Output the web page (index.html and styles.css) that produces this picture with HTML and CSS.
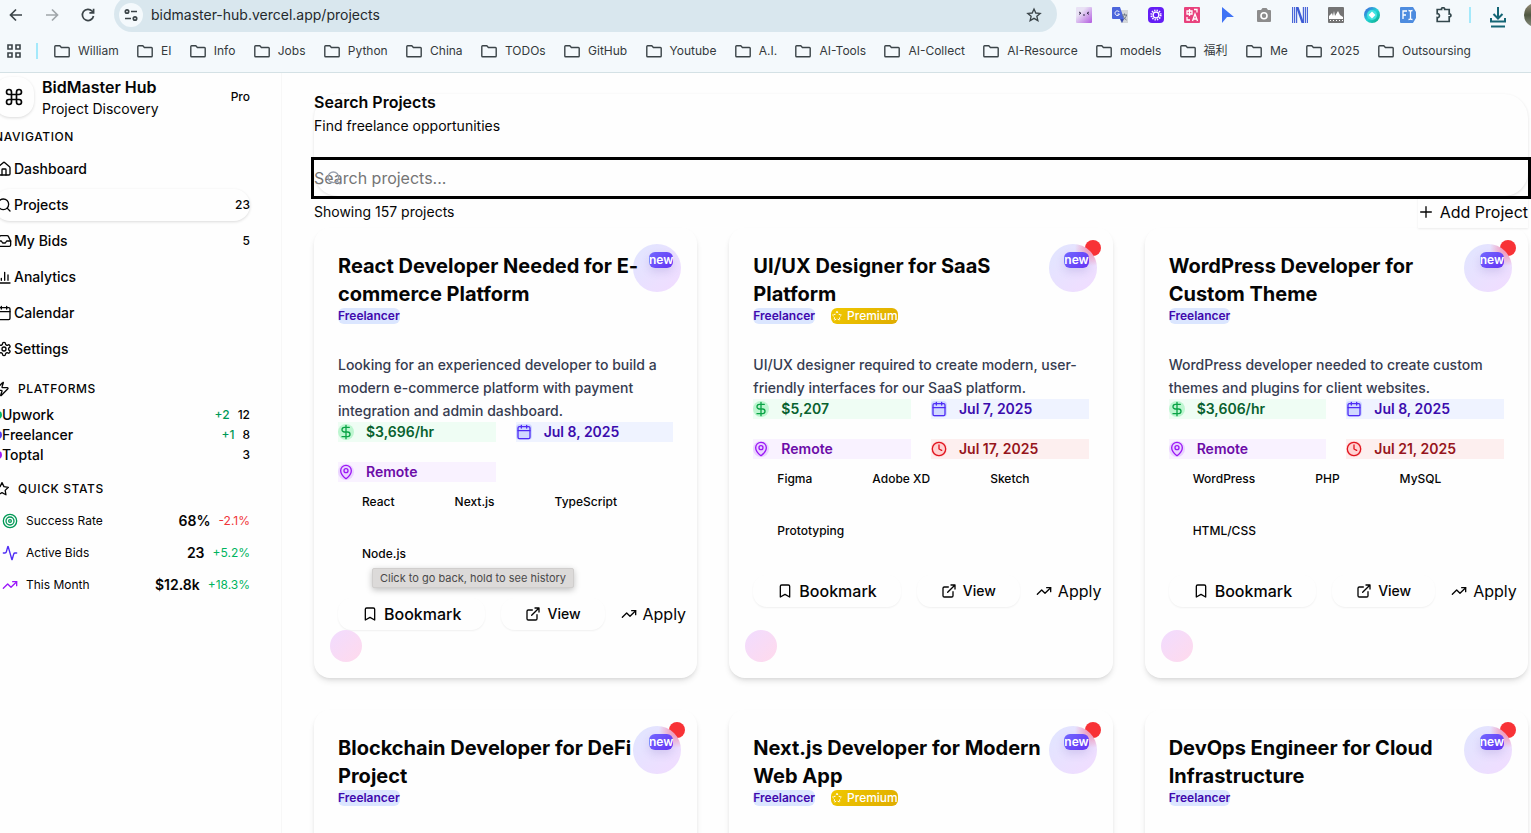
FILE: index.html
```html
<!DOCTYPE html>
<html lang="en">
<head>
<meta charset="utf-8">
<title>BidMaster Hub</title>
<link rel="stylesheet" href="styles.css">
</head>
<body>
<svg class="sprite" aria-hidden="true">
  <symbol id="folder" viewBox="0 0 16 16"><path d="M.8 13V3.6c0-.6.3-.8.8-.8h4.2L7.4 4.500h7c.5 0 .8.3.8.8V13c0 .5-.3.8-.8.8H1.600c-.5 0-.8-.3-.8-.8z"/></symbol>
  <symbol id="house" viewBox="0 0 24 24"><path d="M15 21v-8a1 1 0 0 0-1-1h-4a1 1 0 0 0-1 1v8"/><path d="M3 10a2 2 0 0 1 .709-1.528l7-5.999a2 2 0 0 1 2.582 0l7 5.999A2 2 0 0 1 21 10v9a2 2 0 0 1-2 2H5a2 2 0 0 1-2-2z"/></symbol>
  <symbol id="search" viewBox="0 0 24 24"><circle cx="11" cy="11" r="8"/><path d="m21 21-4.300-4.300"/></symbol>
  <symbol id="inbox" viewBox="0 0 24 24"><path d="M22 12h-6l-2 3h-4l-2-3H2"/><path d="M5.450 5.110 2 12v6a2 2 0 0 0 2 2h16a2 2 0 0 0 2-2v-6l-3.450-6.890A2 2 0 0 0 16.760 4H7.240a2 2 0 0 0-1.790 1.110z"/></symbol>
  <symbol id="chart" viewBox="0 0 24 24"><path d="M3 3v16a2 2 0 0 0 2 2h16M18 17V9M13 17V5M8 17v-3"/></symbol>
  <symbol id="calendar" viewBox="0 0 24 24"><path d="M8 2v4M16 2v4M3 10h18"/><rect x="3" y="4" width="18" height="18" rx="2"/></symbol>
  <symbol id="gear" viewBox="0 0 24 24"><path d="M12.220 2h-.44a2 2 0 0 0-2 2v.18a2 2 0 0 1-1 1.730l-.43.25a2 2 0 0 1-2 0l-.15-.08a2 2 0 0 0-2.730.73l-.22.38a2 2 0 0 0 .73 2.730l.15.1a2 2 0 0 1 1 1.720v.51a2 2 0 0 1-1 1.740l-.15.09a2 2 0 0 0-.73 2.730l.22.38a2 2 0 0 0 2.730.73l.15-.08a2 2 0 0 1 2 0l.43.25a2 2 0 0 1 1 1.730V20a2 2 0 0 0 2 2h.44a2 2 0 0 0 2-2v-.18a2 2 0 0 1 1-1.730l.43-.25a2 2 0 0 1 2 0l.15.08a2 2 0 0 0 2.730-.73l.22-.39a2 2 0 0 0-.73-2.730l-.15-.08a2 2 0 0 1-1-1.740v-.5a2 2 0 0 1 1-1.740l.15-.09a2 2 0 0 0 .73-2.730l-.22-.38a2 2 0 0 0-2.730-.73l-.15.08a2 2 0 0 1-2 0l-.43-.25a2 2 0 0 1-1-1.730V4a2 2 0 0 0-2-2z"/><circle cx="12" cy="12" r="3"/></symbol>
  <symbol id="command" viewBox="0 0 24 24"><path d="M15 6v12a3 3 0 1 0 3-3H6a3 3 0 1 0 3 3V6a3 3 0 1 0-3 3h12a3 3 0 1 0-3-3"/></symbol>
  <symbol id="zap" viewBox="0 0 24 24"><path d="M4 14a1 1 0 0 1-.78-1.630l9.900-10.200a.5.5 0 0 1 .86.46l-1.920 6.020A1 1 0 0 0 13 10h7a1 1 0 0 1 .78 1.630l-9.900 10.200a.5.5 0 0 1-.86-.46l1.920-6.020A1 1 0 0 0 11 14z"/></symbol>
  <symbol id="star" viewBox="0 0 24 24"><path d="m12 2.500 2.950 5.970 6.590.96-4.770 4.650 1.130 6.560L12 17.540l-5.900 3.100 1.130-6.560L2.460 9.430l6.590-.96z"/></symbol>
  <symbol id="target" viewBox="0 0 24 24"><circle cx="12" cy="12" r="10"/><circle cx="12" cy="12" r="6"/><circle cx="12" cy="12" r="2"/></symbol>
  <symbol id="activity" viewBox="0 0 24 24"><path d="M22 12h-2.480a2 2 0 0 0-1.930 1.460l-2.350 8.360a.25.25 0 0 1-.48 0L9.240 2.180a.25.25 0 0 0-.48 0l-2.350 8.360A2 2 0 0 1 4.490 12H2"/></symbol>
  <symbol id="trend" viewBox="0 0 24 24"><path d="M22 7l-8.500 8.500-5-5L2 17"/><path d="M16 7h6v6"/></symbol>
  <symbol id="plus" viewBox="0 0 24 24"><path d="M4 12h16M12 4v16"/></symbol>
  <symbol id="dollar" viewBox="0 0 24 24"><path d="M12 2v20M17 5H9.500a3.500 3.500 0 0 0 0 7h5a3.500 3.500 0 0 1 0 7H6"/></symbol>
  <symbol id="pin" viewBox="0 0 24 24"><path d="M20 10c0 5-5.540 10.190-7.400 11.800a1 1 0 0 1-1.200 0C9.540 20.190 4 15 4 10a8 8 0 0 1 16 0"/><circle cx="12" cy="10" r="3"/></symbol>
  <symbol id="clock" viewBox="0 0 24 24"><circle cx="12" cy="12" r="10"/><path d="M12 6v6l4 2"/></symbol>
  <symbol id="bookmark" viewBox="0 0 24 24"><path d="m19 21-7-4-7 4V5a2 2 0 0 1 2-2h10a2 2 0 0 1 2 2z"/></symbol>
  <symbol id="external" viewBox="0 0 24 24"><path d="M15 3h6v6M10 14 21 3M18 13v6a2 2 0 0 1-2 2H5a2 2 0 0 1-2-2V8a2 2 0 0 1 2-2h6"/></symbol>
</svg>

<header class="browser">
  <div class="toolbar">
    <div class="nav-controls">
      <button aria-label="Back"><svg class="chrome-icon" viewBox="0 0 16 16"><path d="M14 8H3M8 2.500 2.500 8 8 13.500"/></svg></button>
      <button class="faded" aria-label="Forward"><svg class="chrome-icon" viewBox="0 0 16 16"><path d="M2 8h11M8 2.500 13.500 8 8 13.500"/></svg></button>
      <button aria-label="Reload"><svg class="chrome-icon" viewBox="0 0 16 16"><path d="M13.500 9A5.600 5.600 0 1 1 12.200 4.200L13.500 5.600M13.600 1.700v4.200H9.400"/></svg></button>
    </div>
    <div class="omnibox">
      <button class="site-info" aria-label="Site information"><svg class="chrome-icon" viewBox="0 0 16 16"><circle cx="4" cy="4.500" r="1.700"/><path d="M8 4.500h6M2 11.500h6"/><circle cx="12" cy="11.500" r="1.700"/></svg></button>
      <input class="url" aria-label="Address" value="bidmaster-hub.vercel.app/projects">
      <button aria-label="Bookmark this page"><svg class="chrome-icon" viewBox="0 0 24 24"><path stroke-width="2" d="m12 3 2.700 6 6.600.6-5 4.400 1.500 6.500L12 17l-5.800 3.500L7.700 14l-5-4.400 6.600-.6z"/></svg></button>
    </div>
    <div class="extensions">
      <svg class="ext" viewBox="0 0 16 16"><defs><linearGradient id="lilac" x1="0" y1="0" x2="1" y2="1"><stop offset=".3" stop-color="#e9e2f5"/><stop offset="1" stop-color="#b35be0"/></linearGradient></defs><rect width="16" height="16" rx="1" fill="url(#lilac)"/><path d="m3 5 2 1.200L3 7.400M13 5l-2 1.200 2 1.200M7 8h2" fill="none" stroke="#37304c"/></svg>
      <svg class="ext" viewBox="0 0 16 16"><path d="M6 3h10v13H9z" fill="#d4d7da"/><path d="M0 1q0-1 1-1h7l4 12H1q-1 0-1-1z" fill="#4c66dc"/><path d="M8 12h4l-2 4z" fill="#3549ad"/><path d="M7.300 5A2.300 2.300 0 1 0 7.500 7H5.500" fill="none" stroke="#fff"/><path d="M10 8h5m-2.500-1.500V8m2 0c-.5 2-1.500 3.500-3 4.500M11 9c1 2 2 3 3.500 4" fill="none" stroke="#6b7480"/></svg>
      <svg class="ext" viewBox="0 0 16 16"><rect width="16" height="16" rx="4" fill="#641df5"/><circle cx="8" cy="8" r="2.800" fill="none" stroke="#fff" stroke-width="1.200"/><circle cx="8" cy="8" r="4.600" fill="none" stroke="#fff" stroke-width="2" stroke-dasharray="1.300 1.110"/></svg>
      <svg class="ext" viewBox="0 0 16 16"><rect width="16" height="16" rx="1" fill="#e8427d"/><path d="M3 4h5v3H3zM5.500 2v7M8.500 14 11 7l2.500 7M9.500 12h3M10 2.500h3v3M3 10v3h3" fill="none" stroke="#fff" stroke-width="1.300"/></svg>
      <svg class="ext" viewBox="0 0 16 16"><path d="M2 0 14 10H7l-5 6z" fill="#3f73f5"/></svg>
      <svg class="ext" viewBox="0 0 16 16"><path d="M1 4q0-1 1-1h3l1.500-2h4L12 3h2q1 0 1 1v10q0 1-1 1H2q-1 0-1-1z" fill="#8c8c8c"/><circle cx="8" cy="8.700" r="3" fill="none" stroke="#fff" stroke-width="1.600"/></svg>
      <svg class="ext" viewBox="0 0 16 16"><path d="M.6 0v16M2.600 0v16M4.600 0v16M11.400 0v16M13.400 0v16M15.400 0v16" stroke="#4a66d8" stroke-width="1.200"/><path d="M4 0h2.500L12 16H9.500z" fill="#3d5cd5"/></svg>
      <svg class="ext" viewBox="0 0 16 16"><rect width="16" height="16" rx="1" fill="#747474"/><path d="M1 12V9l3-3 1 3 1-5 1 5 3-5 2 4 3 2v2z" fill="#fff"/><path d="M2 13h1v1H2zM5 13h1v1H5zM8 13h1v1H8zM11 13h1v1h-1zM14 13h1v1h-1z" fill="#fff"/></svg>
      <svg class="ext" viewBox="0 0 16 16"><defs><linearGradient id="aqua" x1="0" y1="0" x2="1" y2="1"><stop stop-color="#4054df"/><stop offset=".5" stop-color="#22d3d5"/><stop offset="1" stop-color="#07a77d"/></linearGradient></defs><circle cx="8" cy="8" r="8" fill="url(#aqua)"/><circle cx="8" cy="8" r="5" fill="#42e3e1"/><path d="m8 4.500 3.500 3.500L8 11.500 4.500 8z" fill="#fff"/></svg>
      <svg class="ext" viewBox="0 0 16 16"><path d="M1 0h12l3 5v6l-3 5H1q-1 0-1-1V1q0-1 1-1z" fill="#4d8cdf"/><path d="M3 12V4h4M3 8h3M8.500 3.500q2 0 2 1v7q0 1-2 1M12.500 3.500q-2 0-2 1v7q0 1 2 1" fill="none" stroke="#fff" stroke-width="1.300"/></svg>
      <svg class="ext puzzle" viewBox="0 0 16 16"><path d="M1.200 2.500h4.300C5 0 9 0 8.700 2.500h4.500V7c2.300-.4 2.300 3.200 0 2.900v4.600h-12v-4c3 .4 3-4 0-3.800z"/></svg>
    </div>
    <span class="divider"></span>
    <button class="download" aria-label="Downloads"><svg viewBox="0 0 18 22"><path d="M9 1v11M4.500 8 9 12.500 13.500 8M2 12v3.500h14V12M2 20.500h14"/></svg></button>
    <span class="avatar"></span>
  </div>
  <nav class="bookmarks" aria-label="Bookmarks">
    <button aria-label="Apps"><svg class="apps" viewBox="0 0 16 16"><path d="M2 2h4v4H2zM10 2h4v4h-4zM2 10h4v4H2zM10 10h4v4h-4z"/></svg></button>
    <span class="divider"></span>
    <div class="folders">
      <a href="#"><svg><use href="#folder"/></svg>William</a>
      <a href="#"><svg><use href="#folder"/></svg>EI</a>
      <a href="#"><svg><use href="#folder"/></svg>Info</a>
      <a href="#"><svg><use href="#folder"/></svg>Jobs</a>
      <a href="#"><svg><use href="#folder"/></svg>Python</a>
      <a href="#"><svg><use href="#folder"/></svg>China</a>
      <a href="#"><svg><use href="#folder"/></svg>TODOs</a>
      <a href="#"><svg><use href="#folder"/></svg>GitHub</a>
      <a href="#"><svg><use href="#folder"/></svg>Youtube</a>
      <a href="#"><svg><use href="#folder"/></svg>A.I.</a>
      <a href="#"><svg><use href="#folder"/></svg>AI-Tools</a>
      <a href="#"><svg><use href="#folder"/></svg>AI-Collect</a>
      <a href="#"><svg><use href="#folder"/></svg>AI-Resource</a>
      <a href="#"><svg><use href="#folder"/></svg>models</a>
      <a href="#"><svg><use href="#folder"/></svg>福利</a>
      <a href="#"><svg><use href="#folder"/></svg>Me</a>
      <a href="#"><svg><use href="#folder"/></svg>2025</a>
      <a href="#"><svg><use href="#folder"/></svg>Outsoursing</a>
    </div>
  </nav>
</header>

<div class="app">
  <aside class="sidebar">
    <div class="sidebar-inner">
      <div class="brand">
        <span class="brand-logo"><svg class="icon-lg"><use href="#command"/></svg></span>
        <div class="brand-text"><strong>BidMaster Hub</strong><span>Project Discovery</span></div>
        <span class="plan">Pro</span>
      </div>
      <h2 class="group-title first">NAVIGATION</h2>
      <nav class="menu" aria-label="Main">
        <a href="#"><svg class="icon"><use href="#house"/></svg>Dashboard</a>
        <a href="#" class="active"><svg class="icon"><use href="#search"/></svg>Projects<span>23</span></a>
        <a href="#"><svg class="icon"><use href="#inbox"/></svg>My Bids<span>5</span></a>
        <a href="#"><svg class="icon"><use href="#chart"/></svg>Analytics</a>
        <a href="#"><svg class="icon"><use href="#calendar"/></svg>Calendar</a>
        <a href="#"><svg class="icon"><use href="#gear"/></svg>Settings</a>
      </nav>
      <h2 class="group-title"><svg class="icon"><use href="#zap"/></svg>PLATFORMS</h2>
      <ul class="platforms">
        <li><i class="dot green"></i>Upwork<span class="up">+2</span><span>12</span></li>
        <li><i class="dot indigo"></i>Freelancer<span class="up">+1</span><span>8</span></li>
        <li><i class="dot purple"></i>Toptal<span class="last">3</span></li>
      </ul>
      <h2 class="group-title"><svg class="icon"><use href="#star"/></svg>QUICK STATS</h2>
      <ul class="stats">
        <li><svg class="icon c-green"><use href="#target"/></svg>Success Rate<strong>68%</strong><span class="c-red">-2.1%</span></li>
        <li><svg class="icon c-indigo"><use href="#activity"/></svg>Active Bids<strong>23</strong><span class="c-up">+5.2%</span></li>
        <li><svg class="icon c-purple"><use href="#trend"/></svg>This Month<strong>$12.8k</strong><span class="c-up">+18.3%</span></li>
      </ul>
    </div>
  </aside>

  <main class="main">
    <section class="search-card">
      <h1>Search Projects</h1>
      <p>Find freelance opportunities</p>
      <div class="search-field">
        <svg class="icon"><use href="#search"/></svg>
        <input type="text" aria-label="Search projects" placeholder="Search projects...">
      </div>
    </section>
    <div class="result-bar">
      <span>Showing 157 projects</span>
      <button class="add"><svg class="icon"><use href="#plus"/></svg>Add Project</button>
    </div>

    <div class="grid">
      <article class="card">
        <span class="orb"></span>
        <div class="card-head"><h3>React Developer Needed for E-commerce Platform</h3><span class="badge new">new</span></div>
        <div class="badges"><span class="badge platform">Freelancer</span></div>
        <p class="desc">Looking for an experienced developer to build a modern e-commerce platform with payment integration and admin dashboard.</p>
        <div class="meta">
          <span class="budget"><svg class="icon"><use href="#dollar"/></svg>$3,696/hr</span>
          <span class="date"><svg class="icon"><use href="#calendar"/></svg>Jul 8, 2025</span>
          <span class="place"><svg class="icon"><use href="#pin"/></svg>Remote</span>
        </div>
        <div class="tags"><span>React</span><span>Next.js</span><span>TypeScript</span><span>Node.js</span></div>
        <div class="actions">
          <button class="pill"><svg class="icon"><use href="#bookmark"/></svg>Bookmark</button>
          <button class="pill small"><svg class="icon"><use href="#external"/></svg>View</button>
          <button><svg class="icon"><use href="#trend"/></svg>Apply</button>
        </div>
        <span class="orb-small"></span>
        <span class="tooltip" role="tooltip">Click to go back, hold to see history</span>
      </article>

      <article class="card">
        <span class="alert"></span><span class="orb glow"></span>
        <div class="card-head"><h3>UI/UX Designer for SaaS Platform</h3><span class="badge new">new</span></div>
        <div class="badges"><span class="badge platform">Freelancer</span><span class="badge premium"><svg><use href="#star"/></svg>Premium</span></div>
        <p class="desc">UI/UX designer required to create modern, user-friendly interfaces for our SaaS platform.</p>
        <div class="meta">
          <span class="budget"><svg class="icon"><use href="#dollar"/></svg>$5,207</span>
          <span class="date"><svg class="icon"><use href="#calendar"/></svg>Jul 7, 2025</span>
          <span class="place"><svg class="icon"><use href="#pin"/></svg>Remote</span>
          <span class="deadline"><svg class="icon"><use href="#clock"/></svg>Jul 17, 2025</span>
        </div>
        <div class="tags"><span>Figma</span><span>Adobe XD</span><span>Sketch</span><span>Prototyping</span></div>
        <div class="actions">
          <button class="pill"><svg class="icon"><use href="#bookmark"/></svg>Bookmark</button>
          <button class="pill small"><svg class="icon"><use href="#external"/></svg>View</button>
          <button><svg class="icon"><use href="#trend"/></svg>Apply</button>
        </div>
        <span class="orb-small"></span>
      </article>

      <article class="card">
        <span class="alert"></span><span class="orb glow"></span>
        <div class="card-head"><h3>WordPress Developer for Custom Theme</h3><span class="badge new">new</span></div>
        <div class="badges"><span class="badge platform">Freelancer</span></div>
        <p class="desc">WordPress developer needed to create custom themes and plugins for client websites.</p>
        <div class="meta">
          <span class="budget"><svg class="icon"><use href="#dollar"/></svg>$3,606/hr</span>
          <span class="date"><svg class="icon"><use href="#calendar"/></svg>Jul 8, 2025</span>
          <span class="place"><svg class="icon"><use href="#pin"/></svg>Remote</span>
          <span class="deadline"><svg class="icon"><use href="#clock"/></svg>Jul 21, 2025</span>
        </div>
        <div class="tags"><span>WordPress</span><span>PHP</span><span>MySQL</span><span>HTML/CSS</span></div>
        <div class="actions">
          <button class="pill"><svg class="icon"><use href="#bookmark"/></svg>Bookmark</button>
          <button class="pill small"><svg class="icon"><use href="#external"/></svg>View</button>
          <button><svg class="icon"><use href="#trend"/></svg>Apply</button>
        </div>
        <span class="orb-small"></span>
      </article>

      <article class="card">
        <span class="alert"></span><span class="orb glow"></span>
        <div class="card-head"><h3>Blockchain Developer for DeFi Project</h3><span class="badge new">new</span></div>
        <div class="badges"><span class="badge platform">Freelancer</span></div>
      </article>
      <article class="card">
        <span class="alert"></span><span class="orb glow"></span>
        <div class="card-head"><h3>Next.js Developer for Modern Web App</h3><span class="badge new">new</span></div>
        <div class="badges"><span class="badge platform">Freelancer</span><span class="badge premium"><svg><use href="#star"/></svg>Premium</span></div>
      </article>
      <article class="card">
        <span class="alert"></span><span class="orb glow"></span>
        <div class="card-head"><h3>DevOps Engineer for Cloud Infrastructure</h3><span class="badge new">new</span></div>
        <div class="badges"><span class="badge platform">Freelancer</span></div>
      </article>
    </div>
  </main>
</div>
</body>
</html>
```
FILE: styles.css
```css
* { box-sizing: border-box; }
body {
  margin: 0;
  height: 100vh;
  overflow: hidden;
  display: flex;
  flex-direction: column;
  background: #fefefe;
  color: #050505;
  font: 14px/20px Inter, "Noto Sans CJK SC", sans-serif;
}
h1, h2, h3, p, ul { margin: 0; padding: 0; }
ul { list-style: none; }
a { color: inherit; text-decoration: none; }
button { display: flex; align-items: center; padding: 0; border: 0; background: none; color: inherit; font: inherit; white-space: nowrap; }
svg { display: block; flex: none; fill: none; }
.sprite { display: none; }
.icon, .icon-lg { width: 16px; height: 16px; stroke: currentColor; stroke-width: 2; stroke-linecap: round; stroke-linejoin: round; }
.icon-lg { width: 20px; height: 20px; }

/* Browser bar */
.browser { flex: none; background: #f4f9fc; border-bottom: 1px solid #d4e1e5; color: #35393c; }
.toolbar { display: flex; align-items: center; height: 30px; padding-left: 8px; }
.nav-controls { display: flex; gap: 20px; margin-right: 18px; }
.chrome-icon { width: 16px; height: 16px; stroke: #3b4448; stroke-width: 1.7; }
.faded { opacity: .45; }
.omnibox { flex: 1; display: flex; align-items: center; height: 36px; margin-top: -2px; padding: 2px 15px 0 5px; border-radius: 18px; background: #d9e7ee; }
.site-info { justify-content: center; width: 24px; height: 24px; border-radius: 50%; background: #f4f9fc; }
.url { flex: 1; min-width: 0; margin-left: 8px; padding: 0; border: 0; outline: 0; background: none; color: #24292c; font: inherit; }
.extensions { display: flex; gap: 20px; margin: 0 17px 0 19px; }
.ext { width: 16px; height: 16px; }
.puzzle { stroke: #33474c; stroke-width: 1.7; }
.divider { flex: none; width: 2px; height: 16px; background: #a4e9fb; }
.download { margin: 4px 17px 0 18px; }
.download svg { width: 18px; height: 22px; stroke: #146675; stroke-width: 2; }
.avatar { flex: none; width: 24px; height: 24px; margin-right: -17px; border-radius: 50%; background: linear-gradient(#9a8f7a, #4d5640 50%, #8a8f80); }
.bookmarks { display: flex; align-items: center; height: 42px; padding-left: 6px; font-size: 12px; }
.bookmarks .divider { margin: 0 16px 0 14px; }
.apps { width: 16px; height: 16px; stroke: #3b4448; stroke-width: 1.6; }
.folders { flex: 1; display: flex; justify-content: space-between; margin-right: 60px; }
.folders a { display: flex; align-items: center; gap: 8px; white-space: nowrap; }
.folders svg { width: 16px; height: 16px; stroke: #3b4448; stroke-width: 1.4; }

/* Layout */
.app { flex: 1; min-height: 0; display: flex; overflow: hidden; }
.sidebar { flex: none; width: 282px; padding: 4px 31px 0 0; border-right: 1px solid #f7f7f7; }
.sidebar-inner { margin-left: -6px; }
.main { flex: 1; min-width: 0; padding: 21px 3px 0 32px; }

/* Sidebar */
.brand { display: flex; align-items: center; gap: 8px; height: 40px; }
.brand-logo { display: flex; flex: none; width: 40px; height: 40px; align-items: center; justify-content: center; border-radius: 16px; box-shadow: 0 1px 3px rgba(0, 0, 0, .14); }
.brand-text { display: flex; flex-direction: column; flex: 1; gap: 2px; padding-top: 2px; }
.brand-text strong { font-size: 16px; font-weight: 600; }
.plan { font-size: 12px; font-weight: 500; }
.group-title { display: flex; align-items: center; gap: 8px; height: 32px; margin-top: 8px; font-size: 12px; font-weight: 500; letter-spacing: .6px; }
.group-title.first { height: 20px; margin-top: 10px; margin-bottom: 6px; }
.menu { display: flex; flex-direction: column; gap: 4px; }
.menu a { display: flex; align-items: center; gap: 2px; height: 32px; padding-left: 2px; border-radius: 16px; font-weight: 500; }
.menu .active { box-shadow: 0 1px 3px rgba(0, 0, 0, .14); }
.menu span { margin-left: auto; font-size: 12px; }
.platforms li { display: flex; align-items: center; font-weight: 500; }
.platforms span { margin-left: 8px; font-size: 12px; }
.platforms .up { margin-left: auto; color: #009956; }
.platforms .last { margin-left: auto; }
.dot { width: 8px; height: 8px; border-radius: 50%; }
.green { background: #00b76b; }
.indigo { background: #5440f5; }
.purple { background: #a21af5; }
.stats li { display: flex; align-items: center; gap: 8px; height: 32px; padding-left: 8px; font-size: 12px; }
.stats strong { margin-left: auto; font-size: 14px; font-weight: 600; }
.c-green { color: #009956; }
.c-indigo { color: #4f2ef5; }
.c-purple { color: #9b18fa; }
.c-red { color: #f0353a; }
.c-up { color: #00b45e; }

/* Search */
.search-card { border-radius: 24px; box-shadow: 0 1px 3px rgba(0, 0, 0, .12); }
.search-card h1 { padding-bottom: 6px; font-size: 16px; line-height: 16px; font-weight: 600; }
.search-field { position: relative; margin-top: 24px; color: #99a1af; }
.search-field .icon { position: absolute; left: 12px; top: 10px; }
.search-field input { display: block; width: 100%; height: 36px; padding: 0; border: 0; outline: 3px solid #000; background: none; font: 16px/24px Inter, sans-serif; }
.search-field input::placeholder { color: #757575; opacity: 1; }
.result-bar { display: flex; align-items: center; justify-content: space-between; height: 32px; }
.add { gap: 6px; height: 32px; font-size: 16px; box-shadow: 0 1px 2px rgba(0, 0, 0, .08); }

/* Cards */
.grid { display: grid; grid-template-columns: repeat(3, minmax(0, 1fr)); gap: 32px; }
.card { position: relative; display: flex; flex-direction: column; min-height: 450px; padding: 24px 24px 48px; border-radius: 16px; box-shadow: 0 4px 6px -1px rgba(0, 0, 0, .11), 0 2px 4px -2px rgba(0, 0, 0, .11); }
.orb { position: absolute; right: 16px; top: 16px; width: 48px; height: 48px; border-radius: 50%; background: linear-gradient(135deg, #e0e6ff, #f2dcff); }
.glow { background: radial-gradient(circle at 44px 4px, rgba(250, 100, 135, .75), transparent 18px), linear-gradient(135deg, #e0e6ff, #f2dcff); }
.alert { position: absolute; right: 12px; top: 12px; width: 16px; height: 16px; border-radius: 50%; background: #f83236; }
.orb-small { position: absolute; left: 16px; bottom: 16px; width: 32px; height: 32px; border-radius: 50%; background: linear-gradient(135deg, #f1dcff, #ffdaec); }
.card-head { position: relative; display: flex; align-items: flex-start; justify-content: space-between; }
.card-head h3 { font-size: 20px; line-height: 28px; font-weight: 700; }
.badges { display: flex; gap: 16px; }
.badge { display: flex; align-items: center; gap: 4px; height: 16px; border-radius: 6px; font-size: 12px; font-weight: 500; white-space: nowrap; }
.new { background: linear-gradient(135deg, #7168ff, #6532f3); color: #fff; font-weight: 600; box-shadow: 0 4px 8px rgba(80, 60, 160, .15); }
.platform { background: #dbe6ff; color: #4009ad; font-weight: 600; }
.premium { background: linear-gradient(135deg, #f0c800, #dfac00); color: #fff; }
.premium svg { width: 12px; height: 12px; stroke: #fff; stroke-width: 2; stroke-dasharray: 4 3; }
.desc { margin-top: 29px; color: #363c50; line-height: 23px; font-weight: 500; }
.meta { display: grid; grid-template-columns: 1fr 1fr; gap: 20px; font-weight: 600; }
.meta span { display: flex; align-items: center; gap: 12px; height: 20px; }
.meta .icon { border-radius: 50%; }
.budget { background: #effdf4; color: #08612f; }
.budget .icon { color: #0aa346; background: #bdf6d0; }
.date { background: #eff3ff; color: #3b0cad; }
.date .icon { color: #4f2cf5; background: #d0d8ff; border-radius: 4px; }
.place { background: #f9f2ff; color: #6c0ca8; }
.place .icon { color: #9b18f5; background: #ead3ff; }
.deadline { background: #fdefef; color: #96151c; }
.deadline .icon { color: #e1151f; background: #ffd2d2; }
.tags { display: flex; flex-wrap: wrap; gap: 12px; font-size: 12px; line-height: 16px; font-weight: 500; }
.tags span { padding: 12px 24px; }
.actions { display: flex; gap: 16px; margin-top: 24px; font-size: 16px; }
.actions button { flex: none; gap: 6px; height: 32px; }
.actions .pill { padding: 0 24px; border-radius: 14px; font-weight: 500; box-shadow: 0 1px 2px rgba(0, 0, 0, .06); }
.actions .small { font-size: 14px; }
.tooltip { position: absolute; left: 58px; bottom: 90px; padding: 0 7px; border: 1px solid #d0cecd; border-radius: 2px; background: #dcdad9; color: #4a4949; font-size: 11px; line-height: 18px; white-space: nowrap; box-shadow: 0 2px 6px rgba(0, 0, 0, .25); }
```
